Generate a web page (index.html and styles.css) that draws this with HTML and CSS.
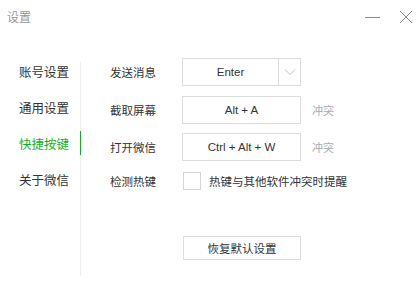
FILE: index.html
```html
<!DOCTYPE html>
<html lang="zh-CN">
<head>
<meta charset="utf-8"/>
<title>设置</title>
<link rel="stylesheet" href="styles.css">
</head>
<body>
<div class="window">
  <div class="titlebar">
    <span class="title">设置</span>
    <div class="controls">
      <svg class="ctl" width="16" height="16" viewBox="0 0 16 16"><line x1="0" y1="8.5" x2="15" y2="8.5" stroke="#8a8a8a" stroke-width="1"/></svg>
      <svg class="ctl" width="14" height="14" viewBox="0 0 14 14"><path d="M1 1 L13 13 M13 1 L1 13" stroke="#8a8a8a" stroke-width="1" fill="none"/></svg>
    </div>
  </div>
  <div class="body">
    <div class="sidebar">
      <div class="nav-item">账号设置</div>
      <div class="nav-item">通用设置</div>
      <div class="nav-item active">快捷按键</div>
      <div class="nav-item">关于微信</div>
    </div>
    <div class="main">
      <div class="row">
        <span class="label">发送消息</span>
        <div class="field select">
          <span class="value">Enter</span>
          <span class="arrow"><svg width="12" height="8" viewBox="0 0 12 8"><path d="M1 1.5 L6 6.5 L11 1.5" stroke="#c4c4c4" stroke-width="1" fill="none"/></svg></span>
        </div>
      </div>
      <div class="row">
        <span class="label">截取屏幕</span>
        <div class="field"><span class="value">Alt + A</span></div>
        <span class="conflict">冲突</span>
      </div>
      <div class="row">
        <span class="label">打开微信</span>
        <div class="field"><span class="value">Ctrl + Alt + W</span></div>
        <span class="conflict">冲突</span>
      </div>
      <div class="row check-row">
        <span class="label">检测热键</span>
        <span class="checkbox"></span>
        <span class="check-text">热键与其他软件冲突时提醒</span>
      </div>
      <div class="actions">
        <button class="reset">恢复默认设置</button>
      </div>
    </div>
  </div>
</div>
</body>
</html>
```

FILE: styles.css
```css
body {
    margin: 0;
    background-color: #ffffff;
    font-family: "Noto Sans CJK SC", "Liberation Sans", sans-serif;
    color: #333;
}

.window {
    width: 419px;
    height: 298px;
    background-color: #ffffff;
}

.titlebar {
    height: 34px;
    display: flex;
    align-items: center;
    justify-content: space-between;
    padding: 0 6px 0 7px;
    box-sizing: border-box;
}

.title {
    font-size: 12px;
    color: #999;
    margin-top: -2px;
}

.controls {
    display: flex;
    align-items: center;
    gap: 18px;
}

.ctl {
    display: block;
}

.body {
    display: flex;
    padding-top: 28px;
}

.sidebar {
    width: 81px;
    height: 214px;
    border-right: 1px solid #eeeeee;
    box-sizing: border-box;
    padding-left: 19px;
}

.nav-item {
    position: relative;
    height: 19px;
    line-height: 19px;
    font-size: 12.5px;
    color: #333;
    margin-bottom: 17px;
}

.nav-item.active {
    color: #1aad19;
}

.nav-item.active::after {
    content: "";
    position: absolute;
    right: -1px;
    top: -3px;
    width: 1px;
    height: 24px;
    background-color: #1aad19;
}

.main {
    padding-left: 29px;
    margin-top: -4px;
}

.row {
    display: flex;
    align-items: center;
    height: 28px;
    margin-bottom: 9.5px;
}

.row.check-row {
    margin-top: -4px;
}

.label {
    width: 72px;
    font-size: 11.5px;
    color: #333;
}

.field {
    width: 119px;
    height: 28px;
    border: 1px solid #dddddd;
    box-sizing: border-box;
    display: flex;
    align-items: center;
}

.value {
    flex: 1;
    text-align: center;
    font-family: "Liberation Sans", sans-serif;
    font-size: 11.5px;
    color: #333;
}

.select .arrow {
    width: 21px;
    height: 26px;
    border-left: 1px solid #dddddd;
    display: flex;
    align-items: center;
    justify-content: center;
}

.conflict {
    margin-left: 11px;
    font-size: 11px;
    color: #aaaaaa;
}

.checkbox {
    width: 18px;
    height: 18px;
    border: 1px solid #d6d6d6;
    box-sizing: border-box;
    margin-left: 1px;
}

.check-text {
    margin-left: 8px;
    font-size: 11.5px;
    color: #333;
}

.actions {
    padding-top: 30px;
    padding-left: 73px;
}

.reset {
    width: 118px;
    height: 24px;
    border: 1px solid #dddddd;
    background-color: #ffffff;
    font-family: "Noto Sans CJK SC", sans-serif;
    font-size: 11.5px;
    color: #333;
    padding: 0;
}
```
